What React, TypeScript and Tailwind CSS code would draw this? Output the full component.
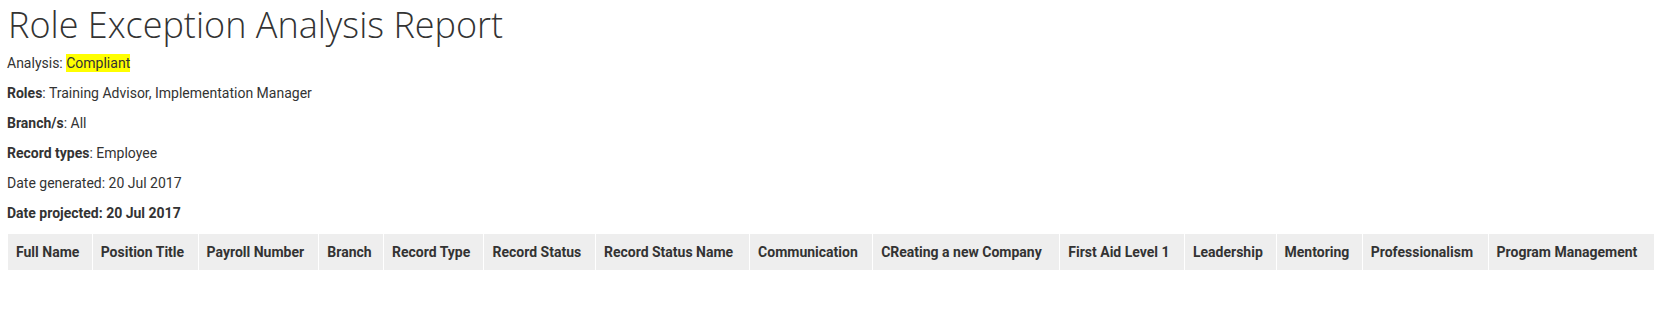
import React from "react";

const columns = [
  "Full Name",
  "Position Title",
  "Payroll Number",
  "Branch",
  "Record Type",
  "Record Status",
  "Record Status Name",
  "Communication",
  "CReating a new Company",
  "First Aid Level 1",
  "Leadership",
  "Mentoring",
  "Professionalism",
  "Program Management",
];

const App: React.FC = () => {
  return (
    <div className="min-h-screen bg-white pl-[7px] pr-[5px] text-[#333] font-['Roboto',sans-serif]">
      <h1 className="m-0 mb-[6px] h-[49px] pl-[1px] text-[36px] font-light leading-[49px] font-['Open_Sans',sans-serif]">
        Role Exception Analysis Report
      </h1>
      <p className="mb-[14px] text-[14px] leading-[16px]">
        Analysis: <span className="bg-[#ffff00] py-[1px]">Compliant</span>
      </p>
      <p className="mb-[14px] text-[14px] leading-[16px]">
        <strong>Roles</strong>: Training Advisor, Implementation Manager
      </p>
      <p className="mb-[14px] text-[14px] leading-[16px]">
        <strong>Branch/s</strong>: All
      </p>
      <p className="mb-[14px] text-[14px] leading-[16px]">
        <strong>Record types</strong>: Employee
      </p>
      <p className="mb-[14px] text-[14px] leading-[16px]">Date generated: 20 Jul 2017</p>
      <p className="mb-[13px] text-[14px] leading-[16px] font-bold">Date projected: 20 Jul 2017</p>

      <table className="w-full border-collapse">
        <thead>
          <tr className="bg-[#eeeeee]">
            {columns.map((col) => (
              <th
                key={col}
                className="border-x border-white px-2 py-2 text-left text-[14px] font-bold leading-[20px] whitespace-nowrap text-[#333]"
              >
                {col}
              </th>
            ))}
          </tr>
        </thead>
      </table>
    </div>
  );
};

export default App;
